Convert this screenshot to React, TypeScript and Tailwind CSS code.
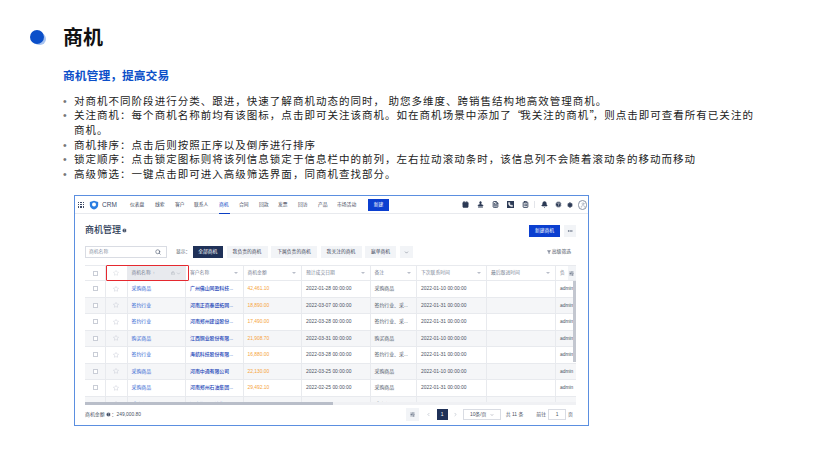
import React from 'react';
import { Bell, CalendarCheck, ChevronDown, ChevronLeft, ChevronRight, CircleHelp, ClipboardList, Ellipsis, FileText, Filter, Lock, Phone, Search, Settings, SlidersHorizontal, Stamp, Star, User } from 'lucide-react';

const bullets: React.ReactNode[] = [
  '对商机不同阶段进行分类、跟进\uFF0C快速了解商机动态的同时\uFF0C 助您多维度、跨销售结构地高效管理商机。',
  <>
    {'关注商机\uFF1A每个商机名称前均有该图标\uFF0C点击即可关注该商机。如在商机场景中添加了'}
    <span className="tracking-[-2px]">{'\u201C'}</span>
    我关注的商机
    <span className="tracking-[-2px]">{'\u201D'}</span>
    {'\uFF0C则点击即可查看所有已关注的商机。'}
  </>,
  '商机排序\uFF1A点击后则按照正序以及倒序进行排序',
  '锁定顺序\uFF1A点击锁定图标则将该列信息锁定于信息栏中的前列\uFF0C左右拉动滚动条时\uFF0C该信息列不会随着滚动条的移动而移动',
  '高级筛选\uFF1A一键点击即可进入高级筛选界面\uFF0C同商机查找部分。',
];

const navItems = [
  ['仪表盘', 'w-[25px]'],
  ['线索', 'w-[20px]'],
  ['客户', 'w-[19px]'],
  ['联系人', 'w-[25px]'],
  ['商机', 'w-[20px]'],
  ['合同', 'w-[20px]'],
  ['回款', 'w-[19px]'],
  ['发票', 'w-[20px]'],
  ['回访', 'w-[20px]'],
  ['产品', 'w-[19px]'],
  ['市场活动', 'w-[32px]'],
];

const tabs = [
  ['全部商机', 'w-[30.5px]'],
  ['我负责的商机', 'w-[41px]'],
  ['下属负责的商机', 'w-[46px]'],
  ['我关注的商机', 'w-[41px]'],
  ['赢单商机', 'w-[31px]'],
];

const rows = [
  ['采购商品', '广州佛山同盈科技...', '42,461.10', '2022-01-28 00:00:00', '采购商品', '2022-01-10 00:00:00'],
  ['签约行业', '河南正商泰盛拓网...', '18,890.00', '2022-03-07 00:00:00', '签约行业、采...', '2022-01-31 00:00:00'],
  ['签约行业', '河南郑州建设股份...', '17,490.00', '2022-03-28 00:00:00', '签约行业、采...', '2022-01-31 00:00:00'],
  ['购买商品', '江西铜业股份有限...', '21,908.70', '2022-03-31 00:00:00', '购买商品', '2022-01-10 00:00:00'],
  ['签约行业', '海航科技股份有限...', '16,880.00', '2022-03-28 00:00:00', '签约行业、采...', '2022-01-31 00:00:00'],
  ['采购商品', '河南中通有限公司', '22,130.00', '2022-03-25 00:00:00', '采购商品', '2022-01-10 00:00:00'],
  ['采购商品', '河南郑州石油集团...', '29,492.10', '2022-02-25 00:00:00', '采购商品', '2022-01-31 00:00:00'],
  ['采购商品', '河南郑州石油集团...', '19,492.10', '2022-02-25 00:00:00', '采购商品', '2022-01-31 00:00:00'],
];

const headers = [
  ['客户名称', 'w-[57.5px]'],
  ['商机金额', 'w-[58.5px]'],
  ['预计成交日期', 'w-[68.5px]'],
  ['备注', 'w-[46.5px]'],
  ['下次联系时间', 'w-[70px]'],
  ['最后跟进时间', 'w-[69px]'],
];

const CrmScreen: React.FC = () => (
  <div className="ml-[74px] w-[515px] h-[231px] border border-[#5b8fe0] bg-white text-[#4a5263] overflow-hidden">
    {/* Top nav */}
    <div className="h-[18px] flex items-center border-b border-[#e8eaee] pl-[3px] pr-[1px]">
      <div className="w-[6px] h-[6px] grid grid-cols-3 gap-[1px]">
        {Array.from({ length: 9 }).map((_, i) => (
          <span key={i} className="bg-[#3d4a66]" />
        ))}
      </div>
      <svg viewBox="0 0 12 12" className="w-[10px] h-[10px] ml-[5px]">
        <path d="M1 2.500 6 1l5 1.500V6c0 3-2.500 4.600-5 5.500C3.500 10.600 1 9 1 6z" fill="#2a7de1" />
        <circle cx="6" cy="5.500" r="2.400" fill="#fff" />
      </svg>
      <span className="ml-[3px] w-[28px] text-[6.5px] text-[#3b4a68]">CRM</span>
      {navItems.map(([name, width]) => (
        <span
          key={name}
          className={`${width} h-full flex items-center text-[4.8px] ${name === '商机' ? 'text-[#0b3fc4] relative' : 'text-[#3d4657]'}`}
        >
          {name}
          {name === '商机' && <span className="absolute left-0 bottom-[-1px] w-[11px] h-[1px] bg-[#0b3fc4]" />}
        </span>
      ))}
      <span className="ml-[-1px] w-[21px] h-[12px] flex items-center justify-center bg-[#0b3fd0] text-white text-[4.8px]">新建</span>
      <div className="ml-auto flex items-center text-[#2c3a55]">
        <div className="flex items-center gap-[8px]">
          <CalendarCheck className="w-[7px] h-[7px] fill-[#2c3a55] text-[#2c3a55]" />
          <Stamp className="w-[7px] h-[7px] fill-[#2c3a55] text-[#2c3a55]" />
          <FileText className="w-[7px] h-[7px] text-[#2c3a55]" strokeWidth={3} />
          <span className="w-[7px] h-[7px] bg-[#2c3a55] flex items-center justify-center">
            <Phone className="w-[5px] h-[5px] fill-white text-white" />
          </span>
          <ClipboardList className="w-[7px] h-[7px] text-[#2c3a55]" strokeWidth={3} />
        </div>
        <span className="ml-[5px] w-px h-[7px] bg-[#e3e5ea]" />
        <Bell className="ml-[6px] w-[7px] h-[7px] fill-[#2c3a55]" />
        <CircleHelp className="ml-[7px] w-[7px] h-[7px] fill-[#2c3a55] text-white" />
        <Settings className="ml-[5px] w-[6px] h-[6px] fill-[#2c3a55]" />
      </div>
      <div className="ml-[5px] w-[9px] h-[10px] rounded-full border border-[#8a93a5] flex items-center justify-center">
        <User className="w-[6px] h-[6px] text-[#8a93a5]" />
      </div>
    </div>

    <div className="pl-[10px] pr-[12px]">
      {/* Page title */}
      <div className="h-[31px] flex items-center pt-[2px]">
        <span className="text-[9px] font-medium text-[#2c3a55]">商机管理</span>
        <CircleHelp className="w-[5px] h-[5px] ml-[1px] fill-[#2c3a55] text-white" />
        <span className="ml-auto w-[31px] h-[12px] flex items-center justify-center bg-[#0b3fd0] text-white text-[4.8px]">新建商机</span>
        <span className="ml-[4px] w-[12px] h-[12px] flex items-center justify-center bg-[#f2f4f7]">
          <Ellipsis className="w-[6px] h-[6px] text-[#2c3a55]" />
        </span>
      </div>

      {/* Filter row */}
      <div className="mt-[1px] h-[12px] flex items-center text-[4.8px]">
        <div className="w-[82px] h-full border border-[#d9dce3] flex items-center justify-between pl-[3px] pr-[5px] text-[#8a93a5]">
          商机名称
          <Search className="w-[6px] h-[6px] text-[#2c3a55]" />
        </div>
        <span className="ml-[9px] w-[16.5px]">{'显示\uFF1A'}</span>
        {tabs.map(([name, width], i) => (
          <span
            key={name}
            className={`${width} h-full flex items-center justify-center mr-[3.5px] ${i === 0 ? 'bg-[#1f3158] text-white' : 'bg-[#f2f4f7] text-[#3d4657]'}`}
          >
            {name}
          </span>
        ))}
        <span className="w-[13px] h-full flex items-center justify-center bg-[#f2f4f7]">
          <ChevronDown className="w-[5px] h-[5px]" />
        </span>
        <span className="ml-auto mr-[5px] flex items-center gap-[1px]">
          <Filter className="w-[4px] h-[4px] fill-[#7b8496] text-[#7b8496]" />
          高级筛选
        </span>
      </div>

      {/* Table */}
      <div className="mt-[7px] relative">
        <div className="h-[16px] flex items-stretch border-y border-[#e8eaee] text-[4.8px] text-[#7b8496]">
          <div className="w-[21px] flex items-center justify-center border-r border-[#e8eaee]">
            <span className="w-[5px] h-[5px] border border-[#c9cdd6]" />
          </div>
          <div className="w-[21.5px] flex items-center justify-center border-r border-[#e8eaee]">
            <Star className="w-[6px] h-[6px] text-[#d5d8df]" />
          </div>
          <div className="w-[58.5px] flex items-center pl-[4px] pr-[4px] bg-[#e8eaee] border-r border-[#e8eaee]">
            商机名称
            <span className="ml-[2px] text-[4px] text-[#a3a9b6]">↕</span>
            <Lock className="ml-auto w-[4px] h-[4px] text-[#a3a9b6]" />
            <ChevronDown className="ml-[1px] w-[5px] h-[5px] text-[#a3a9b6]" />
          </div>
          {headers.map(([name, width]) => (
            <div key={name} className={`${width} flex items-center justify-between pl-[4px] pr-[5px] border-r border-[#e8eaee]`}>
              {name}
              <span className="w-0 h-0 border-x-[2px] border-x-transparent border-t-[2px] border-t-[#b9bec9]" />
            </div>
          ))}
          <div className="flex-1 flex items-center pl-[4px] bg-white overflow-hidden">
            负
            <span className="ml-[3px] flex-1 self-stretch flex items-center justify-center bg-[#f2f4f7]">
              <SlidersHorizontal className="w-[5px] h-[5px] text-[#2c3a55]" />
            </span>
          </div>
        </div>

        <div className="h-[121px] overflow-hidden">
          {rows.map((row, i) => (
            <div
              key={i}
              className={`h-[16.5px] flex items-stretch border-b border-[#e8eaee] text-[4.9px] ${i % 2 === 1 ? 'bg-[#f5f6f8]' : 'bg-white'}`}
            >
              <div className="w-[21px] flex items-center justify-center border-r border-[#e8eaee]">
                <span className="w-[5px] h-[5px] border border-[#c9cdd6] bg-white" />
              </div>
              <div className="w-[21.5px] flex items-center justify-center border-r border-[#e8eaee]">
                <Star className="w-[6px] h-[6px] text-[#c9cdd6]" />
              </div>
              <div className="w-[58.5px] flex items-center pl-[4px] border-r border-[#e8eaee] text-[#2a5bd0]">{row[0]}</div>
              <div className="w-[57.5px] flex items-center pl-[4px] border-r border-[#e8eaee] text-[#1d46b8] font-medium">{row[1]}</div>
              <div className="w-[58.5px] flex items-center pl-[4px] border-r border-[#e8eaee] text-[#f5a33b] font-medium">{row[2]}</div>
              <div className="w-[68.5px] flex items-center pl-[4px] border-r border-[#e8eaee]">{row[3]}</div>
              <div className="w-[46.5px] flex items-center pl-[4px] border-r border-[#e8eaee]">{row[4]}</div>
              <div className="w-[70px] flex items-center pl-[4px] border-r border-[#e8eaee]">{row[5]}</div>
              <div className="w-[69px] border-r border-[#e8eaee]" />
              <div className="flex-1 flex items-center pl-[4px] overflow-hidden">admin</div>
            </div>
          ))}
        </div>

        <div className="h-[3px] bg-[#f0f1f4]">
          <div className="w-[248px] h-full bg-[#b9bec9]" />
        </div>

        {/* Vertical scrollbar */}
        <div className="absolute right-0 top-[16px] w-[3.5px] h-[81px] bg-[#c3c7d0]" />
        {/* Red highlight */}
        <div className="absolute left-[21px] top-0 w-[83px] h-[16px] border border-[#e5292f] rounded-[1px]" />
      </div>

      {/* Footer */}
      <div className="h-[19px] flex items-center text-[4.9px]">
        <span>商机金额</span>
        <CircleHelp className="w-[5px] h-[5px] mx-[1px] fill-[#2c3a55] text-white" />
        <span>{'\uFF1A249,000.80'}</span>
        <span className="ml-auto w-[13px] h-[13px] flex items-center justify-center bg-[#f2f4f7] mr-[7px]">
          <SlidersHorizontal className="w-[5px] h-[5px] text-[#2c3a55]" />
        </span>
        <ChevronLeft className="w-[5px] h-[5px] text-[#8a93a5] mr-[6px]" />
        <span className="w-[11px] h-[11px] flex items-center justify-center bg-[#1f3158] text-white mr-[5px]">1</span>
        <ChevronRight className="w-[5px] h-[5px] text-[#8a93a5] mr-[5px]" />
        <span className="w-[38px] h-[11px] flex items-center justify-center gap-[3px] border border-[#d9dce3]">
          10条/页
          <ChevronDown className="w-[4px] h-[4px]" />
        </span>
        <span className="ml-[5px]">共 11 条</span>
        <span className="ml-[13px]">前往</span>
        <span className="ml-[2px] w-[18px] h-[11px] flex items-center justify-center border border-[#d9dce3]">1</span>
        <span className="ml-[2px] mr-[3px]">页</span>
      </div>
    </div>
  </div>
);

const App: React.FC = () => (
  <div
    className="w-[820px] h-[461px] bg-white overflow-hidden"
    style={{ fontFamily: '"Liberation Sans", "Noto Sans CJK SC", sans-serif' }}
  >
    <div className="pt-[23px] pl-[30px] flex items-center h-[53px]">
      <div className="relative w-[14px] h-[14px] mr-[1px] mt-[-3px]">
        <span className="absolute left-[3px] top-[3px] w-[12.5px] h-[12.5px] rounded-full bg-[#a9c4f0]" />
        <span className="absolute inset-0 rounded-full bg-[#0b4fc9]" />
      </div>
      <h1 className="ml-[18px] text-[20px] leading-[30px] font-bold text-[#111]">商机</h1>
    </div>
    <h2 className="ml-[63px] mt-[13.5px] text-[11.8px] leading-[18px] font-bold text-[#0b4fc9]">{'商机管理\uFF0C提高交易'}</h2>
    <ul className="mt-[9px] ml-[63px] w-[697px] font-['Noto_Sans_CJK_SC',sans-serif] text-[10.5px] leading-[14.7px] tracking-[1.02px] text-[#222]">
      {bullets.map((text, i) => (
        <li key={i} className="flex">
          <span className="w-[11px] shrink-0 font-['Liberation_Sans'] text-[#777]">•</span>
          <span>{text}</span>
        </li>
      ))}
    </ul>
    <div className="mt-[13.3px]">
      <CrmScreen />
    </div>
  </div>
);

export default App;
